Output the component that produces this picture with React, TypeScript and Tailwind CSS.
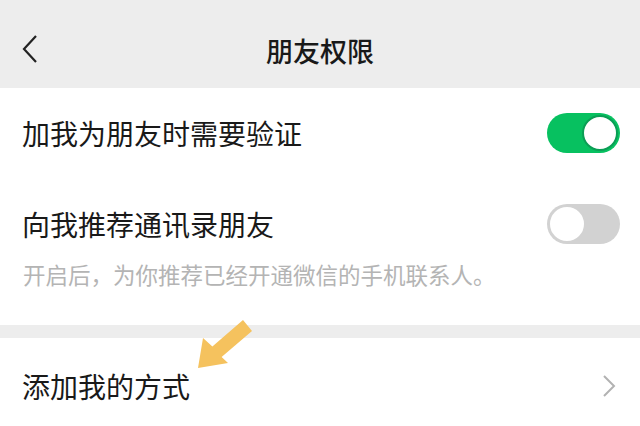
import React from "react";

const font = { fontFamily: '"Noto Sans CJK SC", "Noto Sans", sans-serif' };

function Toggle({ on }: { on: boolean }) {
  return on ? (
    <div className="flex h-[40px] w-[73px] items-center justify-end rounded-full bg-[#07c160] p-[2px]">
      <div className="h-[36px] w-[36px] rounded-full border-2 border-[#0b9e55] bg-white" />
    </div>
  ) : (
    <div className="flex h-[40px] w-[73px] items-center justify-start rounded-full bg-[#d2d2d2] p-[1px]">
      <div className="h-[38px] w-[38px] rounded-full border-2 border-[#d2d2d2] bg-white" />
    </div>
  );
}

export default function App() {
  return (
    <div className="relative h-[426px] w-[640px] overflow-hidden bg-white" style={font}>
      {/* header */}
      <div className="relative flex h-[88px] items-center justify-center bg-[#ededed] pt-[12px]">
        <svg className="absolute left-[20px] top-[34px]" width="20" height="30" viewBox="0 0 20 30">
          <polyline points="16,2 4,15 16,28" fill="none" stroke="#222" strokeWidth="2.2" />
        </svg>
        <span className="text-[27px] font-medium leading-none text-[#191919]">朋友权限</span>
      </div>

      {/* settings */}
      <div className="pb-[37px]">
        <div className="flex h-[90px] items-center justify-between pl-[22px] pr-[20px]">
          <span className="text-[28px] leading-none text-[#191919]">加我为朋友时需要验证</span>
          <Toggle on />
        </div>
        <div className="mt-[18px] flex h-[56px] items-center justify-between pl-[22px] pr-[20px]">
          <span className="text-[28px] leading-none text-[#191919]">向我推荐通讯录朋友</span>
          <Toggle on={false} />
        </div>
        <p className="mt-[8px] pl-[23px] text-[22.5px] leading-[28px] text-[#b4b4b4]">
          开启后，为你推荐已经开通微信的手机联系人。
        </p>
      </div>

      <div className="h-[13px] bg-[#ededed]" />

      <div className="flex h-[96px] items-center justify-between pl-[22px] pr-[24px]">
        <span className="text-[28px] leading-none text-[#191919]">添加我的方式</span>
        <svg width="14" height="22" viewBox="0 0 14 22">
          <polyline points="2,1 12,11 2,21" fill="none" stroke="#b2b2b2" strokeWidth="2" />
        </svg>
      </div>

      {/* annotation arrow */}
      <svg className="absolute left-[190px] top-[318px]" width="70" height="60" viewBox="0 0 70 60">
        <polygon
          points="8,50 38,45 31.6,39 62,13 53,2 22.4,28.4 13,20"
          fill="#f5c25e"
        />
      </svg>
    </div>
  );
}
